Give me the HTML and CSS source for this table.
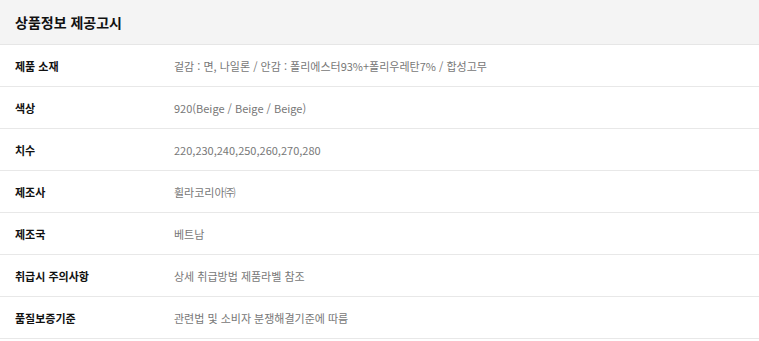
FILE: index.html
```html
<!DOCTYPE html>
<html lang="ko">
<head>
<meta charset="utf-8">
<link rel="stylesheet" href="styles.css">
</head>
<body>
<section class="notice">
  <h2 class="notice-title">상품정보 제공고시</h2>
  <dl class="info">
    <div class="row"><dt>제품 소재</dt><dd>겉감 : 면, 나일론 / 안감 : 폴리에스터93%+폴리우레탄7% / 합성고무</dd></div>
    <div class="row"><dt>색상</dt><dd>920(Beige / Beige / Beige)</dd></div>
    <div class="row"><dt>치수</dt><dd>220,230,240,250,260,270,280</dd></div>
    <div class="row"><dt>제조사</dt><dd>휠라코리아㈜</dd></div>
    <div class="row"><dt>제조국</dt><dd>베트남</dd></div>
    <div class="row"><dt>취급시 주의사항</dt><dd>상세 취급방법 제품라벨 참조</dd></div>
    <div class="row"><dt>품질보증기준</dt><dd>관련법 및 소비자 분쟁해결기준에 따름</dd></div>
  </dl>
</section>
</body>
</html>
```
FILE: styles.css
```css
* { box-sizing: border-box; }
html, body { margin: 0; padding: 0; background: #fff; }
body { font-family: "Noto Sans CJK KR", "Noto Sans", sans-serif; }
.notice-title {
  margin: 0;
  height: 45px;
  padding: 0 15px;
  display: flex;
  align-items: center;
  background: #f4f4f4;
  border-bottom: 1px solid #e6e6e6;
  font-size: 14px;
  font-weight: 700;
  color: #111;
}
.info { margin: 0; }
.row {
  display: flex;
  align-items: center;
  height: 42px;
  border-bottom: 1px solid #e8e8e8;
  padding-left: 15px;
  font-size: 11px;
}
.row dt {
  width: 159px;
  font-weight: 700;
  color: #111;
}
.row dd {
  margin: 0;
  color: #777;
}
```
